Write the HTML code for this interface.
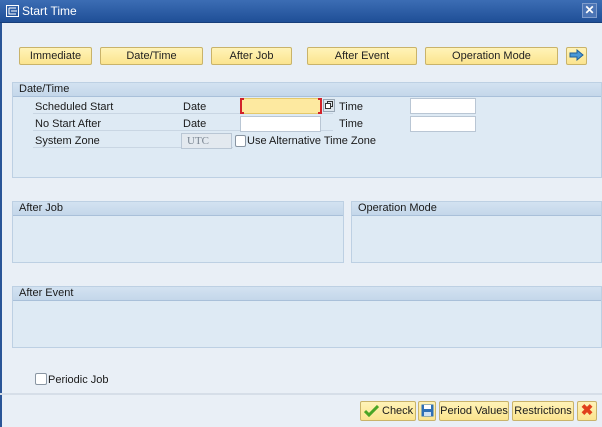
<!DOCTYPE html>
<html><head><meta charset="utf-8"><style>
*{box-sizing:border-box;margin:0;padding:0}
body{width:602px;height:427px;overflow:hidden;background:#e9eff6;font-family:"Liberation Sans",sans-serif;font-size:11px;color:#1a1a1a;position:relative}
.abs{position:absolute}
.title{left:0;top:0;width:602px;height:23px;background:linear-gradient(#3c6db4,#1f4f97);border-bottom:1px solid #173e7a;color:#fff;font-size:12px}
.lb{left:0;top:23px;width:2px;height:404px;background:#2a5597}
.btn{position:absolute;top:47px;height:18px;background:linear-gradient(#fff3b8,#fbe48e);border:1px solid #c9b36a;border-radius:2px;text-align:center;line-height:16px;font-size:11px;color:#222}
.panel{position:absolute;background:#deeaf4;border:1px solid #bdd0e3}
.ph{height:14px;background:linear-gradient(#d3e2f1,#c4d7ea);border-bottom:1px solid #a9c0d9;padding-left:6px;line-height:13px}
.inp{position:absolute;height:16px;background:#fff;border:1px solid #b9c6d4}
.lbl{position:absolute}
.bb{position:absolute;top:401px;height:20px;background:linear-gradient(#fff3b8,#fbe48e);border:1px solid #c9b36a;border-radius:2px;line-height:18px;text-align:center}
.cb{position:absolute;width:11px;height:11px;background:#fff;border:1px solid #8a96a3;border-radius:2px}
</style></head><body>
<div class="abs title">
<svg class="abs" style="left:6px;top:5px" width="13" height="12" viewBox="0 0 13 12"><rect x="0.5" y="0.5" width="12" height="11" fill="none" stroke="#fff"/><path d="M3 3h7M3 3v6h7M5 6h6" stroke="#fff" fill="none"/></svg>
<span class="abs" style="left:22px;top:4px">Start Time</span>
<div class="abs" style="left:582px;top:3px;width:15px;height:15px;background:#4b74b5;border:1px solid #7f9ccc;color:#fff;text-align:center;line-height:13px;font-size:12px;font-weight:bold">✕</div>
</div>
<div class="abs lb"></div>

<div class="btn" style="left:19px;width:73px">Immediate</div>
<div class="btn" style="left:100px;width:103px">Date/Time</div>
<div class="btn" style="left:211px;width:81px">After Job</div>
<div class="btn" style="left:307px;width:110px">After Event</div>
<div class="btn" style="left:425px;width:133px">Operation Mode</div>
<div class="btn" style="left:566px;width:21px;padding-top:1px"><svg width="15" height="12" viewBox="0 0 15 12"><path d="M1 4h7V1l6 5-6 5V8H1z" fill="#4a98d6" stroke="#1f5e99"/></svg></div>

<div class="panel" style="left:12px;top:82px;width:590px;height:96px"><div class="ph">Date/Time</div></div>
<span class="lbl" style="left:35px;top:101px">Scheduled Start</span>
<span class="lbl" style="left:35px;top:118px">No Start After</span>
<span class="lbl" style="left:35px;top:135px">System Zone</span>
<span class="lbl" style="left:183px;top:101px">Date</span>
<span class="lbl" style="left:183px;top:118px">Date</span>
<div class="abs" style="left:33px;top:113px;width:300px;height:1px;background:#c9d6e3"></div>
<div class="abs" style="left:33px;top:130px;width:300px;height:1px;background:#c9d6e3"></div>
<div class="abs" style="left:33px;top:147px;width:200px;height:1px;background:#c9d6e3"></div>
<div class="inp" style="left:240px;top:98px;width:81px;background:#fde9a0;border-color:#e5c96a"></div>
<div class="abs" style="left:240px;top:98px;width:4px;height:16px;border:2px solid #d2232a;border-right:none"></div>
<div class="abs" style="left:318px;top:98px;width:4px;height:16px;border:2px solid #d2232a;border-left:none"></div>
<div class="abs" style="left:323px;top:99px;width:12px;height:13px;background:#dde6ee;border:1px solid #9aa8b6"><svg width="10" height="11" viewBox="0 0 10 11"><rect x="1.5" y="3.5" width="5" height="5" fill="#fff" stroke="#333"/><path d="M3.5 3.5V1.5h5v5h-2" fill="none" stroke="#333"/></svg></div>
<div class="inp" style="left:240px;top:116px;width:81px"></div>
<span class="lbl" style="left:339px;top:101px">Time</span>
<span class="lbl" style="left:339px;top:118px">Time</span>
<div class="inp" style="left:410px;top:98px;width:66px"></div>
<div class="inp" style="left:410px;top:116px;width:66px"></div>
<div class="inp" style="left:181px;top:133px;width:51px;background:#e3e9ef;color:#7a8591;font-family:'Liberation Serif',serif;font-size:11px;padding-left:5px;line-height:14px">UTC</div>
<div class="cb" style="left:235px;top:135px;width:11px;height:12px"></div>
<span class="lbl" style="left:247px;top:135px">Use Alternative Time Zone</span>

<div class="panel" style="left:12px;top:201px;width:332px;height:62px"><div class="ph">After Job</div></div>
<div class="panel" style="left:351px;top:201px;width:251px;height:62px"><div class="ph">Operation Mode</div></div>
<div class="panel" style="left:12px;top:286px;width:590px;height:62px"><div class="ph">After Event</div></div>

<div class="cb" style="left:35px;top:373px;width:12px;height:12px"></div>
<span class="lbl" style="left:48px;top:374px">Periodic Job</span>

<div class="abs" style="left:0;top:393px;width:602px;height:2px;background:#d6dee8"></div>
<div class="bb" style="left:360px;width:56px;text-align:left;padding-left:21px"><svg class="abs" style="left:3px;top:3px" width="15" height="12" viewBox="0 0 15 12"><path d="M1 6l4 4 9-9" stroke="#4aa526" stroke-width="3" fill="none"/></svg>Check</div>
<div class="bb" style="left:418px;width:18px;padding-top:2px"><svg width="13" height="13" viewBox="0 0 13 13"><rect x="0.5" y="0.5" width="12" height="12" fill="#2e6fb5"/><rect x="3" y="1" width="7" height="4" fill="#fff"/><rect x="3" y="8" width="7" height="4" fill="#cfe0f2"/></svg></div>
<div class="bb" style="left:439px;width:70px">Period Values</div>
<div class="bb" style="left:512px;width:62px">Restrictions</div>
<div class="bb" style="left:577px;width:20px;color:#e0401c;font-weight:bold;font-size:15px;line-height:18px">✖</div>
</body></html>
